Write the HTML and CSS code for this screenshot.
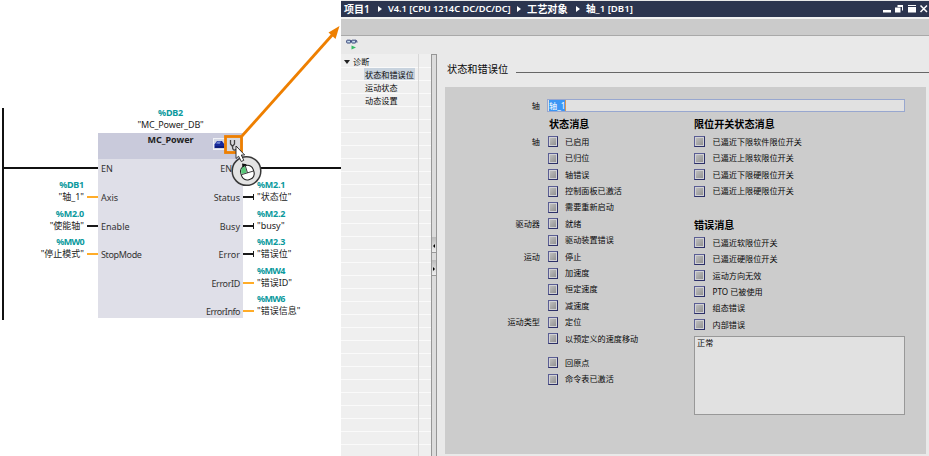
FILE: index.html
```html
<!DOCTYPE html>
<html lang="zh-CN">
<head>
<meta charset="utf-8">
<title>轴_1 [DB1]</title>
<link rel="stylesheet" href="styles.css">
</head>
<body>
<main class="app">
  <section class="ladder">
    <div class="rail"></div>
    <div class="block-caption"><b class="tag">%DB2</b><span class="caption-name">"MC_Power_DB"</span></div>
    <div class="network">
      <div class="side inputs">
        <div class="power"></div>
        <div class="row"><div class="operand"><b class="tag">%DB1</b><span>"轴_1"</span></div><i class="wire orange"></i></div>
        <div class="row"><div class="operand"><b class="tag">%M2.0</b><span>"使能轴"</span></div><i class="wire"></i></div>
        <div class="row"><div class="operand"><b class="tag squeeze">%MW0</b><span>"停止模式"</span></div><i class="wire orange"></i></div>
      </div>
      <div class="block">
        <div class="block-head">MC_Power</div>
        <div class="pins first"><span>EN</span><span class="eno">ENO</span></div>
        <div class="pins"><span class="axis">Axis</span><span>Status</span></div>
        <div class="pins"><span>Enable</span><span>Busy</span></div>
        <div class="pins"><span class="tight">StopMode</span><span>Error</span></div>
        <div class="pins"><span></span><span class="tight">ErrorID</span></div>
        <div class="pins"><span></span><span class="tight info">ErrorInfo</span></div>
      </div>
      <div class="side outputs">
        <div class="power"></div>
        <div class="row"><i class="wire stop"></i><div class="operand"><b class="tag">%M2.1</b><span>"状态位"</span></div></div>
        <div class="row"><i class="wire stop"></i><div class="operand"><b class="tag">%M2.2</b><span>"busy"</span></div></div>
        <div class="row"><i class="wire stop"></i><div class="operand"><b class="tag">%M2.3</b><span>"错误位"</span></div></div>
        <div class="row"><i class="wire orange"></i><div class="operand"><b class="tag squeeze">%MW4</b><span>"错误ID"</span></div></div>
        <div class="row"><i class="wire orange"></i><div class="operand"><b class="tag squeeze">%MW6</b><span>"错误信息"</span></div></div>
      </div>
    </div>
    <svg class="overlay" width="345" height="200" viewBox="0 0 345 200">
      <rect x="213.500" y="138.500" width="11" height="11" fill="#d4d8e4" stroke="#f0f1f6"/>
      <path d="M214.500 148v-3.500l2.500-3.500h5l2.500 3.500v3.500z" fill="#182a9c"/>
      <path d="M216 143.500l1.500-2h3.500l-1.500 2.500z" fill="#6d83cf"/><path d="M215 147h9" stroke="#09145f"/>
      <rect x="225.500" y="136.500" width="16" height="16" fill="#d9dade" stroke="#ee7f00" stroke-width="2.800"/>
      <path d="M230.500 140v4l2 2.500 2-2.500v-4M232.500 146.500q0 4 2.500 3.500t2-3" fill="none" stroke="#444" stroke-width="1.300"/>
      <path d="M242 136L334 33" stroke="#ee7f00" stroke-width="2.800"/>
      <path d="M339.500 26l-11 6.500 7 6.500z" fill="#ee7f00"/>
      <circle cx="246.500" cy="171" r="14.300" fill="#e3e3e3" stroke="#383838" stroke-width="1.500"/>
      <g transform="rotate(-17 247 173)">
        <rect x="241" y="165.500" width="13" height="14.500" rx="5.800" fill="#fff" stroke="#222" stroke-width="1.100"/>
        <path d="M241.700 172.500v-1.500q.3-5 5.300-5v6.500z" fill="#58c878"/>
        <path d="M241.500 173h12M247.500 165.500v7.500" stroke="#222" stroke-width=".8"/>
      </g>
      <path d="M242 163.500l5 .8-4.500 3z" fill="#111"/>
      <path d="M236 146v12.500l2.600-2.300 2.700 5.300 2.500-1.200-2.500-5.300h3.400z" fill="#fff" stroke="#222" stroke-width=".9"/>
    </svg>
  </section>

  <section class="window">
    <header class="titlebar">
      <span class="crumb c1">项目1</span><i class="sep"></i><span class="crumb c2">V4.1 [CPU 1214C DC/DC/DC]</span><i class="sep"></i><span class="crumb c3">工艺对象</span><i class="sep"></i><span class="crumb c4">轴_1 [DB1]</span>
      <svg class="controls" width="48" height="16" viewBox="0 0 48 16" fill="#fff">
        <path d="M2 9h8v2.500H2z"/>
        <path d="M14 6.500h5.500v5H14zM16.500 4H22v5.500h-1V6h-4.500z"/>
        <path d="M27 4h8v1h-8zM27 6h8v5.500h-8z"/>
        <path d="M39.500 4.500l6.500 6.500M46 4.500l-6.500 6.500" stroke="#fff" stroke-width="1.500" fill="none"/>
      </svg>
    </header>
    <div class="band"></div>
    <div class="toolbar">
      <svg width="12" height="12" viewBox="0 0 12 12" fill="none" stroke="#354277">
        <rect x=".7" y="1.200" width="4" height="2.800" rx=".6" fill="#c8dff0"/><rect x="5.700" y="1.200" width="4" height="2.800" rx=".6" fill="#c8dff0"/><path d="M4 2h2M9.500 1q1.500 0 1.500 2.500"/>
        <path d="M5.500 6.500l4.500 2-4.500 2z" fill="#35ba64" stroke="none"/>
      </svg>
    </div>
    <div class="workspace">
      <nav class="tree">
        <div class="node root"><i class="expander"></i>诊断</div>
        <div class="node"><span class="selected">状态和错误位</span></div>
        <div class="node"><span>运动状态</span></div>
        <div class="node"><span>动态设置</span></div>
      </nav>
      <div class="splitter"><i class="grip left"></i><i class="grip right"></i></div>
      <div class="content">
        <h1 class="heading">状态和错误位</h1>
        <div class="panel">
          <label class="axis-row"><span>轴</span><div class="field"><mark>轴_1</mark></div></label>
          <div class="columns">
            <div class="status">
              <h2>状态消息</h2>
              <div class="item"><em>轴</em><i class="led"></i>已启用</div>
              <div class="item"><em></em><i class="led"></i>已归位</div>
              <div class="item"><em></em><i class="led"></i>轴错误</div>
              <div class="item"><em></em><i class="led"></i>控制面板已激活</div>
              <div class="item"><em></em><i class="led"></i>需要重新启动</div>
              <div class="item"><em>驱动器</em><i class="led"></i>就绪</div>
              <div class="item"><em></em><i class="led"></i>驱动装置错误</div>
              <div class="item"><em>运动</em><i class="led"></i>停止</div>
              <div class="item"><em></em><i class="led"></i>加速度</div>
              <div class="item"><em></em><i class="led"></i>恒定速度</div>
              <div class="item"><em></em><i class="led"></i>减速度</div>
              <div class="item"><em>运动类型</em><i class="led"></i>定位</div>
              <div class="item"><em></em><i class="led"></i>以预定义的速度移动</div>
              <div class="item gap"><em></em><i class="led"></i>回原点</div>
              <div class="item"><em></em><i class="led"></i>命令表已激活</div>
            </div>
            <div class="errors">
              <h2>限位开关状态消息</h2>
              <div class="item"><i class="led"></i>已逼近下限软件限位开关</div>
              <div class="item"><i class="led"></i>已逼近上限软限位开关</div>
              <div class="item"><i class="led"></i>已逼近下限硬限位开关</div>
              <div class="item"><i class="led"></i>已逼近上限硬限位开关</div>
              <h2 class="second">错误消息</h2>
              <div class="item"><i class="led"></i>已逼近软限位开关</div>
              <div class="item"><i class="led"></i>已逼近硬限位开关</div>
              <div class="item"><i class="led"></i>运动方向无效</div>
              <div class="item"><i class="led"></i>PTO 已被使用</div>
              <div class="item"><i class="led"></i>组态错误</div>
              <div class="item"><i class="led"></i>内部错误</div>
              <div class="message">正常</div>
            </div>
          </div>
        </div>
      </div>
    </div>
  </section>
</main>
</body>
</html>
```
FILE: styles.css
```css
* { box-sizing: border-box; }
body { margin: 0; background: #fff; color: #080808; font-family: "Noto Sans", "Noto Sans CJK SC", sans-serif; font-size: 8.15px; overflow: hidden; }
i, em { font-style: normal; display: block; flex: none; }
.app { display: flex; width: 929px; height: 456px; }

/* Ladder network */
.ladder { position: relative; width: 341px; flex: none; padding-top: 107px; font-size: 9px; line-height: 12px; color: #222; white-space: nowrap; }
.rail { position: absolute; left: 2px; top: 108px; width: 2px; height: 212px; background: #111; }
.tag { display: block; color: #0b999d; font-weight: 700; letter-spacing: -0.25px; }
.squeeze { letter-spacing: -0.7px; }
.block-caption { display: flex; flex-direction: column; align-items: center; width: 341px; height: 26px; line-height: 11.5px; }
.caption-name { letter-spacing: -0.15px; }
.network { display: flex; height: 185px; }
.side { padding-top: 34px; }
.inputs { width: 98px; padding-left: 3px; }
.outputs { width: 98px; }
.power { height: 12px; border-top: 2px solid #111; }
.row { display: flex; height: 28.5px; }
.inputs .row { justify-content: flex-end; gap: 3px; }
.inputs .operand { text-align: right; }
.outputs .row { gap: 3px; }
.wire { width: 11px; height: 2px; margin-top: 17px; background: #1a1a1a; }
.orange { background: #ffac28; }
.stop { position: relative; }
.stop::after { content: ""; position: absolute; right: 0; top: -2px; width: 1px; height: 6px; background: #1a1a1a; }
.block { width: 145px; background: #dfdfe8; flex: none; }
.block-head { height: 26px; background: #c9cadb; text-align: center; font-weight: 700; color: #222; line-height: 14px; }
.pins { display: flex; justify-content: space-between; padding: 13px 3px 0; height: 28.5px; color: #333; }
.pins.first { height: 20px; padding-top: 4px; }
.eno { padding-right: 1px; }
.tight { letter-spacing: -0.35px; }
.info { letter-spacing: -0.5px; }
.overlay { position: absolute; left: 0; top: 0; z-index: 2; }

/* Editor window */
.window { width: 588px; flex: none; padding-top: 1px; background: #e9e9e9; display: flex; flex-direction: column; }
.titlebar { height: 16px; background: #2c354f; color: #fff; display: flex; align-items: center; padding-left: 3px; font-size: 9.3px; font-weight: 600; line-height: 16px; white-space: nowrap; }
.crumb { flex: none; }
.c1 { width: 26px; font-size: 10px; }
.c2 { width: 122px; letter-spacing: -0.05px; }
.c3 { width: 41px; font-size: 10.2px; }
.c4 { font-size: 9.6px; }
.sep { border: 3px solid transparent; border-left: 4px solid #fff; border-right: 0; width: 4px; margin: 0 6px 0 8px; }
.c2 + .sep { margin-left: 7px; }
.controls { margin-left: auto; }
.band { height: 19px; background: #cbcbcb; border-top: 2px solid #f2f2f2; border-bottom: 1px solid #a9a9a9; }
.toolbar { height: 18px; padding: 3px 0 0 5px; }
.toolbar svg { display: block; }
.workspace { display: flex; height: 402px; }
.tree { width: 90px; padding-top: 1px; background: linear-gradient(#d8d8d8, #d8d8d8) 77px 0 / 1px 100% no-repeat, repeating-linear-gradient(#efefef 0 12px, #fafafa 12px 13px) 0 1px; }
.node { height: 13px; line-height: 13px; padding-left: 23px; white-space: nowrap; }
.node span { display: inline-block; height: 12px; line-height: 13px; padding: 0 1px; }
.node .selected { background: #c8d3de; }
.root { display: flex; align-items: center; padding-left: 3px; gap: 3px; }
.expander { border: 3px solid transparent; border-top: 4px solid #222; border-bottom: 0; }
.splitter { width: 6px; background: #dcdcdc; border: 1px solid #969696; border-bottom: 0; padding-top: 182px; }
.grip { width: 4px; height: 16px; background: linear-gradient(#bbb, #eee); border-bottom: 1px solid #999; margin-bottom: 7px; padding: 7px 0 0 1px; }
.grip::before { content: ""; display: block; border: 2px solid transparent; width: 0; }
.grip.left::before { border-right-color: #000; border-left: 0; }
.grip.right::before { border-left-color: #000; border-right: 0; }
.content { width: 492px; padding-left: 8px; }
.heading { margin: 0 0 0 2px; height: 33px; padding-top: 7px; display: flex; gap: 8px; font-size: 10.2px; font-weight: 400; line-height: 17px; }
.heading::after { content: ""; flex: 1; height: 1px; background: #666; margin-top: 11px; }
.panel { width: 481px; height: 367px; background: #ccc; padding-top: 12px; }
.axis-row { display: flex; height: 13px; line-height: 13px; }
.axis-row > span { width: 95px; text-align: right; margin-right: 7px; }
.field { width: 358px; height: 13px; background: #e1e1e1; border: 1px solid #98a7cf; padding-left: 1px; line-height: 11px; }
mark { display: inline-block; height: 11px; line-height: 11px; vertical-align: top; background: #3b96f5; color: #fff; border-right: 1px solid #d89852; }
.columns { display: flex; }
.status { width: 249px; }
.errors { width: 212px; }
h2 { margin: 0; height: 21.7px; padding-top: 5px; font-size: 10.1px; line-height: 15px; font-weight: 700; color: #000; }
.status h2 { padding-left: 104px; }
.item { display: flex; align-items: center; height: 16.4px; line-height: 16px; white-space: nowrap; }
.item em { width: 95px; margin-right: 8px; text-align: right; }
.led { width: 10px; height: 11px; margin-right: 7px; border: 1px solid #5b5e94; border-right-color: #2c3068; border-bottom-color: #2c3068; background: linear-gradient(135deg, #c4c4c4, #8c8c8c); box-shadow: inset 0 0 0 1px #d1d1d4; }
.errors .led { width: 11px; margin-right: 7.5px; }
.gap { margin-top: 8px; }
.second { height: 35.3px; padding-top: 18.7px; }
.message { width: 211px; height: 79px; margin-top: 3.6px; border: 1px solid #989898; background: #e1e1e1; padding-left: 2px; line-height: 11px; }
```
